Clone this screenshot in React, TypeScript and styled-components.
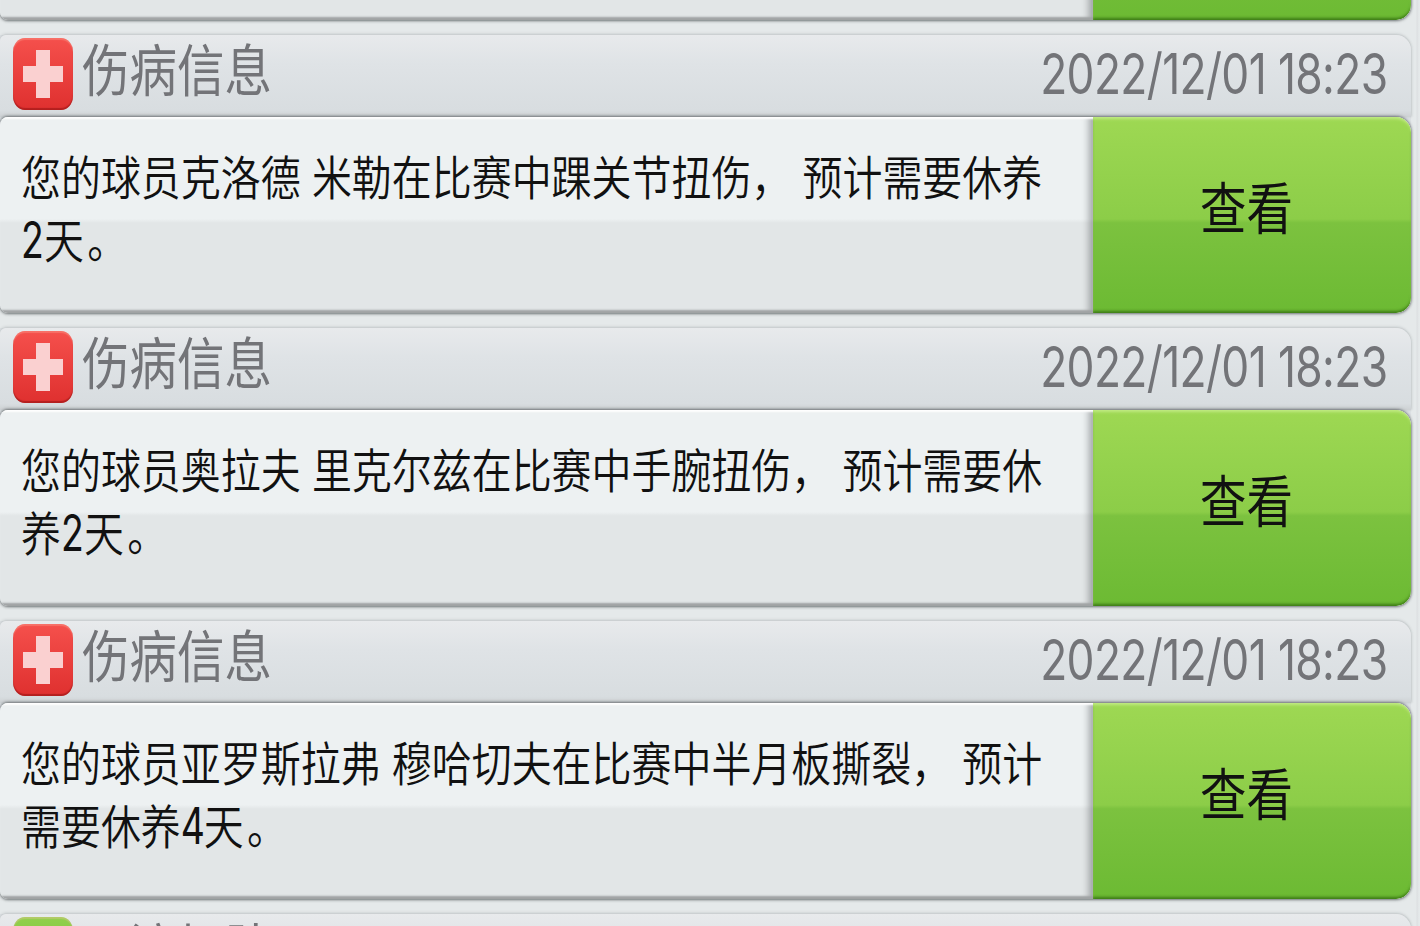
import styled, { createGlobalStyle } from "styled-components";

const GlobalStyle = createGlobalStyle`
  * {
    box-sizing: border-box;
  }
  body {
    margin: 0;
    height: 926px;
    overflow: hidden;
    background-color: #e3e7e9;
    font-family: Inter, "Noto Sans CJK SC", sans-serif;
  }
`;
const Feed = styled.div`
  display: flex;
  flex-direction: column;
  gap: 15px;
  width: 1420px;
  height: 926px;
  overflow: hidden;
  background: linear-gradient(to right, #e5e9ea 1416px, #dcdfe1 1417px, #e5e9ea 1419px);
`;
const Card = styled.article`
  flex: none;
  width: 1411px;
  border-radius: 0 15px 15px 8px;
  background: #dde1e4;
`;
const TailCard = styled.div`
  display: flex;
  flex-direction: column;
  justify-content: flex-end;
  flex: none;
  width: 1411px;
  height: 20px;
`;
const Header = styled.header`
  display: flex;
  align-items: flex-start;
  height: 82px;
  padding: 3px 24px 0 13px;
  border-radius: 6px 15px 0 0;
  color: #737478;
  background: linear-gradient(#e8eaec, #dfe3e6 35%, #d8dde0 92%, #cdd1d3);
  box-shadow: 0 -1px 3px rgba(120, 125, 128, 0.3), 1px 0 2px rgba(120, 125, 128, 0.15);
`;
const IconBox = styled.div<{ $green?: boolean }>`
  display: flex;
  justify-content: center;
  align-items: center;
  flex: none;
  width: 60px;
  height: 72px;
  border-radius: 12px / 14px;
  background: ${({ $green }) =>
    $green ? "linear-gradient(#92d04c, #6dbc34)" : "linear-gradient(#f5504c, #df302f)"};
  box-shadow: inset 0 -2px 1px rgba(150, 20, 20, 0.6), inset 0 2px 1px rgba(255, 190, 170, 0.3);
`;
const Title = styled.h2`
  flex: 1;
  margin: 0 0 0 9px;
  font-size: 56px;
  font-weight: 400;
  line-height: 66px;
  white-space: nowrap;
  transform: scaleX(0.848);
  transform-origin: left;
`;
const DateText = styled.time`
  font-size: 56px;
  line-height: 72px;
  letter-spacing: -0.8px;
  white-space: nowrap;
  transform: scaleX(0.792);
  transform-origin: right;
`;
const Body = styled.div`
  display: flex;
  flex: none;
  height: 196px;
  border-radius: 8px 15px 15px 8px;
  overflow: hidden;
  background: linear-gradient(#edf1f2 52%, #e2e6e7 54%);
  box-shadow: 0 -1px 3px rgba(80, 85, 88, 0.7), 0 1px 3px rgba(80, 85, 88, 0.75);
`;
const Message = styled.div`
  flex: 1;
  min-width: 0;
  padding: 29px 0 0 21px;
  color: #111;
  box-shadow: inset 0 -5px 2px -2px #a0a3a4, inset 0 3px 2px -1px #fff,
    inset -9px 0 7px -5px rgba(70, 75, 78, 0.45);
`;
const Line = styled.p`
  width: max-content;
  margin: 0;
  font-size: 47px;
  font-weight: 350;
  line-height: 63px;
  white-space: pre;
  transform: scaleX(0.85);
  transform-origin: left;
`;
const Digit = styled.span`
  display: inline-block;
  width: 27px;
  font-size: 50px;
  font-weight: 430;
  line-height: 1;
  transform: scaleX(0.88);
  transform-origin: left;
`;
const FullStop = styled.span`
  margin-left: 4px;
`;
const ViewButton = styled.button`
  flex: none;
  width: 318px;
  padding: 0 11px 21px 0;
  border: none;
  border-radius: 0 15px 15px 0;
  font-family: inherit;
  font-size: 56px;
  color: #111;
  background: linear-gradient(#9ed853, #8ccd48 52%, #7cc23f 54%, #6cba33);
  box-shadow: inset 0 3px 3px -1px #c0ea83, inset 0 -3px 3px -1px #3d7b16;
`;
const ButtonLabel = styled.span`
  display: block;
  transform: scaleX(0.83);
`;

interface IMessage {
  title: string;
  date: string;
  lines: string[];
}

const messages: IMessage[] = [
  {
    title: "伤病信息",
    date: "2022/12/01 18:23",
    lines: ["您的球员克洛德 米勒在比赛中踝关节扭伤， 预计需要休养", "2天。"],
  },
  {
    title: "伤病信息",
    date: "2022/12/01 18:23",
    lines: ["您的球员奥拉夫 里克尔兹在比赛中手腕扭伤， 预计需要休", "养2天。"],
  },
  {
    title: "伤病信息",
    date: "2022/12/01 18:23",
    lines: ["您的球员亚罗斯拉弗 穆哈切夫在比赛中半月板撕裂， 预计", "需要休养4天。"],
  },
];

const Cross = () => (
  <svg width="40" height="48" viewBox="0 0 40 48">
    <path d="M13 0h14v16h13v16H27v16H13V32H0V16h13z" fill="#fad0d0" />
  </svg>
);

const renderPart = (part: string, index: number) => {
  if (/\d/.test(part)) return <Digit key={index}>{part}</Digit>;
  if (part === "。") return <FullStop key={index}>{part}</FullStop>;
  return part;
};

const MessageBody = ({ lines }: { lines: string[] }) => (
  <Body>
    <Message>
      {lines.map((line) => (
        <Line key={line}>{line.split(/(\d|。)/).map(renderPart)}</Line>
      ))}
    </Message>
    <ViewButton>
      <ButtonLabel>查看</ButtonLabel>
    </ViewButton>
  </Body>
);

const App = () => (
  <>
    <GlobalStyle />
    <Feed>
      <TailCard>
        <Body>
          <Message />
          <ViewButton />
        </Body>
      </TailCard>
      {messages.map(({ title, date, lines }, index) => (
        <Card key={index}>
          <Header>
            <IconBox>
              <Cross />
            </IconBox>
            <Title>{title}</Title>
            <DateText>{date}</DateText>
          </Header>
          <MessageBody lines={lines} />
        </Card>
      ))}
      <Card>
        <Header>
          <IconBox $green />
          <Title>一流加队</Title>
        </Header>
      </Card>
    </Feed>
  </>
);

export default App;
